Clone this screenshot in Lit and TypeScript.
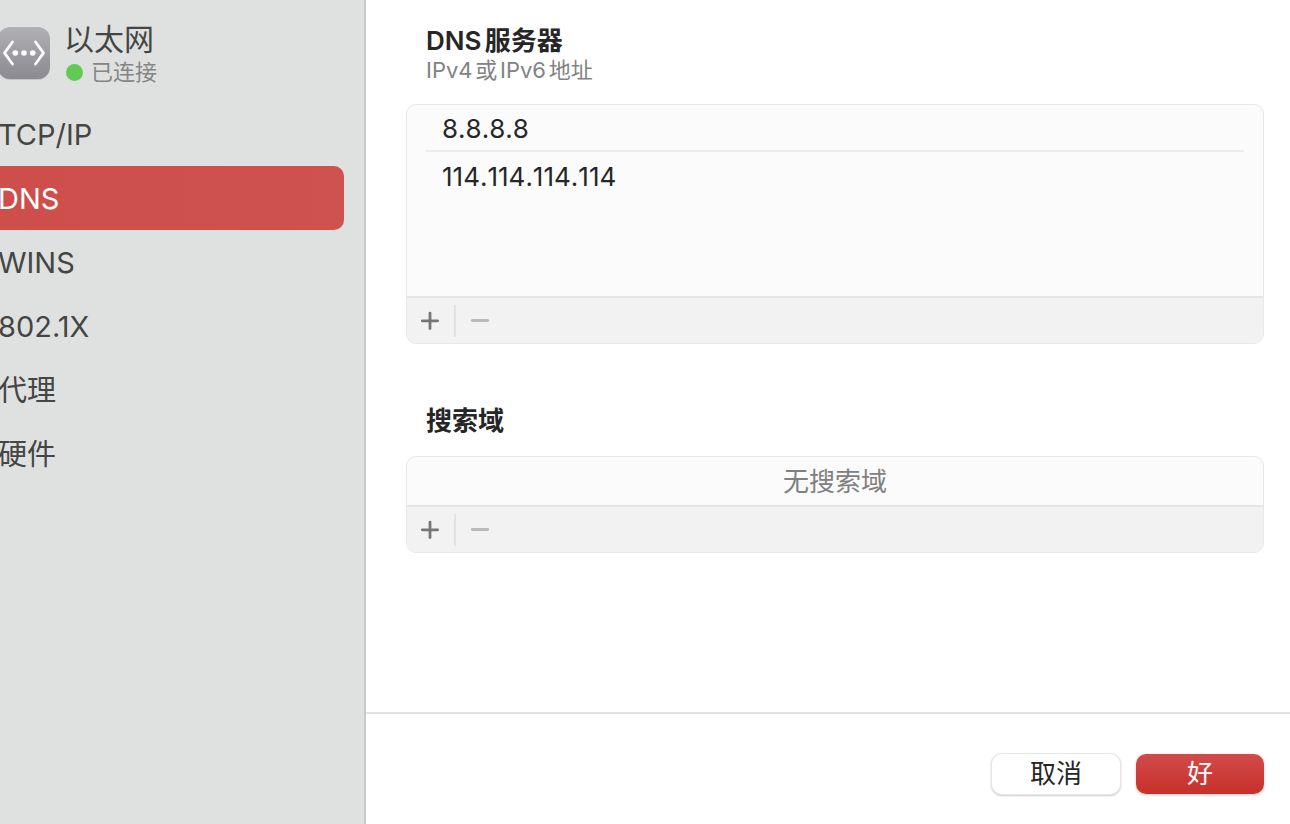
import { LitElement, html, css, nothing } from "lit";
import { customElement, property, state } from "lit/decorators.js";

@customElement("list-toolbar")
class ListToolbar extends LitElement {
  @property() label = "";

  static styles = css`
    :host {
      display: flex;
      align-items: center;
      height: 47px;
      background: #f2f2f2;
      border-top: 2px solid #e5e5e5;
    }
    .tool {
      display: grid;
      place-items: center;
      width: 47px;
      height: 100%;
      padding: 0;
      border: 0;
      background: none;
      color: #767676;
    }
    .tool:disabled {
      color: #b9b9b9;
    }
    .tool svg {
      display: block;
      width: 21px;
      height: 21px;
      fill: none;
      stroke: currentColor;
      stroke-width: 2.8;
      stroke-linecap: round;
    }
    .divider {
      width: 2px;
      height: 32px;
      background: #e2e2e2;
    }
  `;

  render() {
    return html`
      <button class="tool" type="button" aria-label="添加${this.label}">
        <svg viewBox="0 0 21 21"><path d="M2.3 10.8H17.7M10 3.1V18.5" /></svg>
      </button>
      <span class="divider"></span>
      <button class="tool" type="button" aria-label="移除${this.label}" disabled>
        <svg viewBox="0 0 21 21"><path d="M3.3 10.5H18.7" /></svg>
      </button>
    `;
  }
}

@customElement("app-root")
class AppRoot extends LitElement {
  @state() private selected = "DNS";

  private tabs = ["TCP/IP", "DNS", "WINS", "802.1X", "代理", "硬件"];
  private servers = ["8.8.8.8", "114.114.114.114"];

  static styles = css`
    :host {
      display: flex;
      min-height: 100vh;
      overflow: hidden;
      background: #fff;
      color: #262626;
      font-family: Inter, "Noto Sans CJK SC", sans-serif;
      font-size: 26px;
      line-height: 32px;
      text-autospace: normal;
    }
    * {
      box-sizing: border-box;
    }
    .sidebar {
      flex: none;
      width: 370px;
      margin-left: -4px;
      padding: 22px 20px 0 0;
      background: #dfe1e0;
      border-right: 2px solid #c8c9c9;
      color: #444645;
    }
    .service {
      display: flex;
      align-items: center;
      gap: 14px;
      height: 62px;
      margin-bottom: 18px;
    }
    .service-icon {
      display: block;
      width: 54px;
      height: 56px;
    }
    .service-name {
      font-size: 30px;
      line-height: 38px;
    }
    .status {
      display: flex;
      align-items: center;
      gap: 8px;
      padding-left: 2px;
      color: #848685;
      font-size: 22px;
      line-height: 28px;
    }
    .dot {
      width: 17px;
      height: 17px;
      border-radius: 50%;
      background: #61ca56;
    }
    .tab {
      display: flex;
      align-items: center;
      height: 64px;
      padding: 2px 0 0 2px;
      border-radius: 0 10px 10px 0;
      color: inherit;
      font-size: 29px;
      line-height: 36px;
      text-decoration: none;
    }
    .tab[aria-current] {
      background: linear-gradient(90deg, #cd4e4a, #cf524f);
      color: #fff;
    }
    .panel {
      flex: 1;
      min-width: 0;
      display: flex;
      flex-direction: column;
    }
    .content {
      flex: 1;
      display: flex;
      flex-direction: column;
      gap: 61px;
      padding: 25px 26px 24px 40px;
    }
    .heading {
      margin: 0 20px;
      font-size: 26px;
      line-height: 32px;
      font-weight: 600;
    }
    .note {
      margin: 0 20px 2px;
      color: #828282;
      font-size: 22px;
      line-height: 26px;
    }
    .card {
      margin-top: 19px;
      overflow: hidden;
      border: 1px solid #e8e8e8;
      border-radius: 10px;
      background: #fbfbfb;
    }
    .note + .card {
      margin-top: 21px;
    }
    .servers {
      min-height: 191px;
      margin: 0;
      padding: 0 19px;
      list-style: none;
    }
    .server {
      display: flex;
      align-items: center;
      height: 47px;
      padding: 2px 16px 0;
      font-kerning: none;
      font-feature-settings: "calt" 0;
    }
    .server:not(:last-child) {
      border-bottom: 2px solid #ececec;
    }
    .empty {
      margin: 0;
      padding-top: 2px;
      color: #808080;
      line-height: 46px;
      text-align: center;
    }
    .actions {
      display: flex;
      justify-content: flex-end;
      gap: 16px;
      padding: 40px 26px 30px;
      border-top: 2px solid #e2e2e2;
    }
    .button {
      width: 128px;
      height: 40px;
      padding: 0;
      border: 0;
      border-radius: 10px;
      background: #fff;
      box-shadow: 0 0 0 1px #e6e6e6, 0 1px 2px 1px rgba(0, 0, 0, 0.2);
      color: #262626;
      font: inherit;
    }
    .primary {
      background: linear-gradient(#d14b4b, #c92f2a);
      box-shadow: 0 1px 3px rgba(201, 47, 42, 0.3);
      color: #fff;
    }
  `;

  render() {
    return html`
      <aside class="sidebar">
        <div class="service">
          <svg class="service-icon" viewBox="0 0 54 56" aria-hidden="true">
            <defs>
              <linearGradient id="metal" x2="0" y2="1">
                <stop offset="0" stop-color="#b1b0b5" />
                <stop offset="1" stop-color="#8b8a90" />
              </linearGradient>
            </defs>
            <rect x="2" y="3" width="52" height="52" rx="12" fill="#c4c5c6" />
            <rect x="2" y="2" width="52" height="52" rx="12" fill="url(#metal)" />
            <path d="M16.5 17L8.5 28L16.5 39M39.5 17L47.5 28L39.5 39" fill="none" stroke="#fff"
              stroke-width="2.8" stroke-linecap="round" stroke-linejoin="round" />
            <circle cx="19.3" cy="28" r="2.8" fill="#fff" />
            <circle cx="28" cy="28" r="2.8" fill="#fff" />
            <circle cx="36.7" cy="28" r="2.8" fill="#fff" />
          </svg>
          <div>
            <div class="service-name">以太网</div>
            <div class="status"><span class="dot"></span>已连接</div>
          </div>
        </div>
        <nav>
          ${this.tabs.map(
            (t) => html`<a
              class="tab"
              href="#${t}"
              aria-current=${t === this.selected ? "page" : nothing}
              @click=${() => (this.selected = t)}
              >${t}</a
            >`
          )}
        </nav>
      </aside>
      <main class="panel">
        <div class="content">
          <section>
            <h2 class="heading">DNS服务器</h2>
            <p class="note">IPv4或IPv6地址</p>
            <div class="card">
              <ul class="servers">
                ${this.servers.map((s) => html`<li class="server">${s}</li>`)}
              </ul>
              <list-toolbar label="DNS服务器"></list-toolbar>
            </div>
          </section>
          <section>
            <h2 class="heading">搜索域</h2>
            <div class="card">
              <p class="empty">无搜索域</p>
              <list-toolbar label="搜索域"></list-toolbar>
            </div>
          </section>
        </div>
        <footer class="actions">
          <button class="button" type="button">取消</button>
          <button class="button primary" type="button">好</button>
        </footer>
      </main>
    `;
  }
}
